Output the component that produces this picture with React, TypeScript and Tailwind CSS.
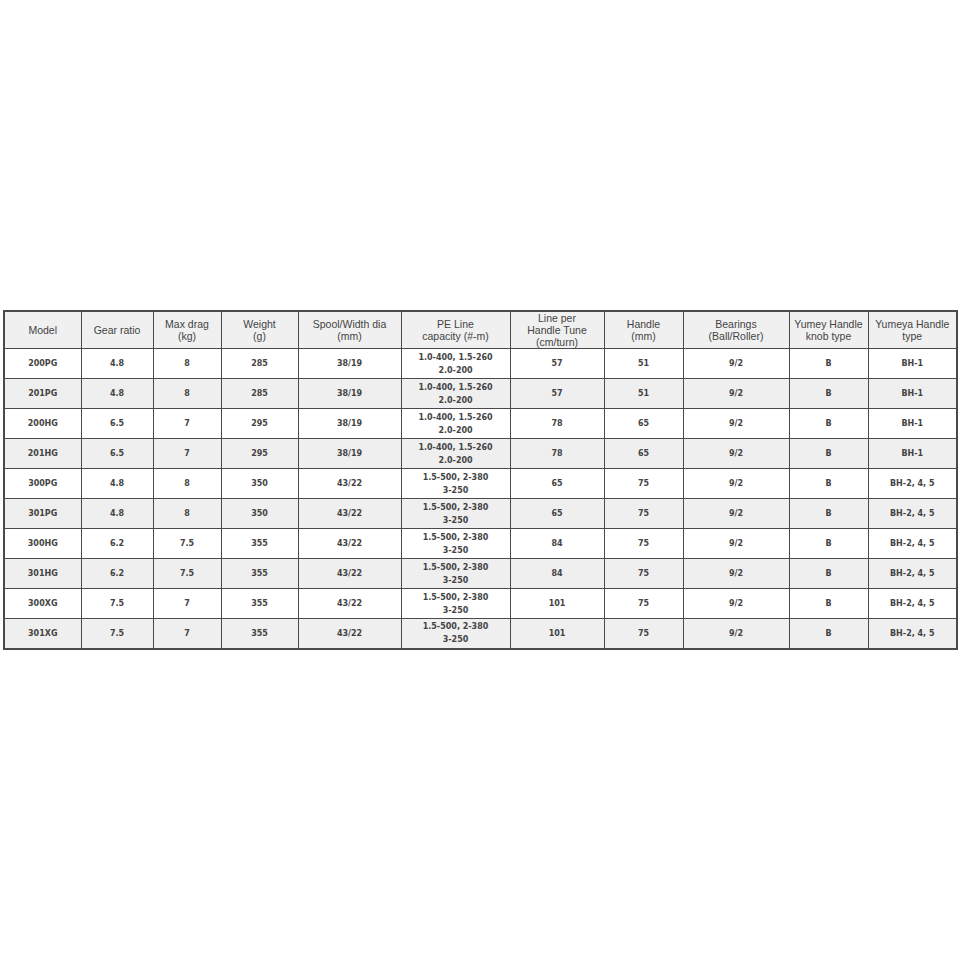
import React from "react";

const headers = [
  ["Model"],
  ["Gear ratio"],
  ["Max drag", "(kg)"],
  ["Weight", "(g)"],
  ["Spool/Width dia", "(mm)"],
  ["PE Line", "capacity (#-m)"],
  ["Line per", "Handle Tune", "(cm/turn)"],
  ["Handle", "(mm)"],
  ["Bearings", "(Ball/Roller)"],
  ["Yumey Handle", "knob type"],
  ["Yumeya Handle", "type"],
];

const widths = [77, 72, 68, 77, 103, 109, 94, 79, 106, 79, 89];

const small = ["1.0-400, 1.5-260", "2.0-200"];
const big = ["1.5-500, 2-380", "3-250"];

const rows: (string | string[])[][] = [
  ["200PG", "4.8", "8", "285", "38/19", small, "57", "51", "9/2", "B", "BH-1"],
  ["201PG", "4.8", "8", "285", "38/19", small, "57", "51", "9/2", "B", "BH-1"],
  ["200HG", "6.5", "7", "295", "38/19", small, "78", "65", "9/2", "B", "BH-1"],
  ["201HG", "6.5", "7", "295", "38/19", small, "78", "65", "9/2", "B", "BH-1"],
  ["300PG", "4.8", "8", "350", "43/22", big, "65", "75", "9/2", "B", "BH-2, 4, 5"],
  ["301PG", "4.8", "8", "350", "43/22", big, "65", "75", "9/2", "B", "BH-2, 4, 5"],
  ["300HG", "6.2", "7.5", "355", "43/22", big, "84", "75", "9/2", "B", "BH-2, 4, 5"],
  ["301HG", "6.2", "7.5", "355", "43/22", big, "84", "75", "9/2", "B", "BH-2, 4, 5"],
  ["300XG", "7.5", "7", "355", "43/22", big, "101", "75", "9/2", "B", "BH-2, 4, 5"],
  ["301XG", "7.5", "7", "355", "43/22", big, "101", "75", "9/2", "B", "BH-2, 4, 5"],
];

const App: React.FC = () => {
  return (
    <div className="w-[960px] h-[960px] bg-white pt-[310px] pl-[3px]">
      <table className="table-fixed border-collapse border-2 border-[#4a4a4a] w-[953px] text-[#3a3a3a]">
        <colgroup>
          {widths.map((w, i) => (
            <col key={i} style={{ width: w }} />
          ))}
        </colgroup>
        <thead>
          <tr className="h-[36px] bg-[#f0f0f0]">
            {headers.map((h, i) => (
              <th
                key={i}
                className="border border-[#4a4a4a] p-0 font-normal text-[10.5px] leading-[12px] text-center align-middle text-[#444] font-['Liberation_Sans',sans-serif]"
              >
                {h.map((line, j) => (
                  <div key={j}>{line}</div>
                ))}
              </th>
            ))}
          </tr>
        </thead>
        <tbody>
          {rows.map((row, r) => (
            <tr
              key={r}
              className={r % 2 === 0 ? "h-[30px] bg-white" : "h-[30px] bg-[#efefef]"}
            >
              {row.map((cell, c) => (
                <td
                  key={c}
                  className="border border-[#4a4a4a] p-0 text-center align-middle font-bold text-[8px] leading-[13px] text-[#444] font-['DejaVu_Sans',sans-serif]"
                >
                  {Array.isArray(cell)
                    ? cell.map((line, j) => <div key={j}>{line}</div>)
                    : cell}
                </td>
              ))}
            </tr>
          ))}
        </tbody>
      </table>
    </div>
  );
};

export default App;
